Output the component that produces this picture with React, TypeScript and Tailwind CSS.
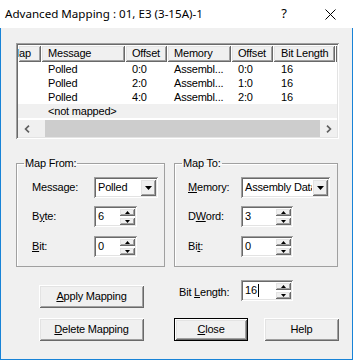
import React from "react";

const raised =
  "bg-[#f0f0f0] shadow-[inset_1px_1px_0_#fff,inset_-1px_-1px_0_#696969,inset_2px_2px_0_#e3e3e3,inset_-2px_-2px_0_#a0a0a0]";
const sunken =
  "bg-white shadow-[inset_1px_1px_0_#a0a0a0,inset_-1px_-1px_0_#fff,inset_2px_2px_0_#696969,inset_-2px_-2px_0_#e3e3e3]";

const colW = ["w-[23px]", "w-[84px]", "w-[42px]", "w-[64px]", "w-[42px]", "w-[62px]"];
const headers = ["Map", "Message", "Offset", "Memory", "Offset", "Bit Length"];
const rows = [
  ["", "Polled", "0:0", "Assembl...", "0:0", "16"],
  ["", "Polled", "2:0", "Assembl...", "1:0", "16"],
  ["", "Polled", "4:0", "Assembl...", "2:0", "16"],
];

function Tri({ up, small }: { up?: boolean; small?: boolean }) {
  if (small) {
    return (
      <svg width="5" height="3" viewBox="0 0 5 3" className="block">
        {up ? <path d="M2.5 0 L5 3 L0 3 Z" fill="#000" /> : <path d="M0 0 L5 0 L2.5 3 Z" fill="#000" />}
      </svg>
    );
  }
  return (
    <svg width="7" height="4" viewBox="0 0 7 4" className="block">
      <path d="M0 0 L7 0 L3.5 4 Z" fill="#000" />
    </svg>
  );
}

function Spin({ value, wide, caret }: { value: string; wide?: boolean; caret?: boolean }) {
  return (
    <div className={`${sunken} ${wide ? "w-[52px]" : "w-[43px]"} h-[21px] p-[2px] flex`}>
      <div className="flex-1 pl-[2px] flex items-center leading-[13px]">
        {value}
        {caret && <span className="inline-block w-px h-[13px] bg-black ml-[1px]" />}
      </div>
      <div className="w-[16px] flex flex-col gap-[1px]">
        <div className={`${raised} flex-1 flex items-center justify-center`}>
          <Tri up small />
        </div>
        <div className={`${raised} flex-1 flex items-center justify-center`}>
          <Tri small />
        </div>
      </div>
    </div>
  );
}

function Combo({ value, w }: { value: string; w: string }) {
  return (
    <div className={`${sunken} ${w} h-[21px] p-[2px] flex`}>
      <div className="flex-1 pl-[2px] flex items-center overflow-hidden whitespace-nowrap">{value}</div>
      <div className={`${raised} w-[16px] flex items-center justify-center`}>
        <Tri />
      </div>
    </div>
  );
}

function Btn({ children, w, isDefault }: { children: React.ReactNode; w: string; isDefault?: boolean }) {
  return (
    <div className={`${w} h-[23px] ${isDefault ? "border border-black" : ""}`}>
      <div className={`${raised} w-full h-full flex items-center justify-center`}>{children}</div>
    </div>
  );
}

function Row({ label, labelW, children, mt }: { label: React.ReactNode; labelW: string; children: React.ReactNode; mt: string }) {
  return (
    <div className={`flex items-center h-[21px] ${mt}`}>
      <div className={labelW}>{label}</div>
      {children}
    </div>
  );
}

export default function App() {
  return (
    <div className="w-[353px] h-[360px] overflow-hidden font-['Liberation_Sans',Arial,sans-serif] text-[11px] tracking-[-0.2px] text-black">
      {/* title bar */}
      <div className="h-[28px] bg-white flex items-center font-['Noto_Sans','Segoe_UI',sans-serif] text-[11.6px] tracking-normal">
        <div className="flex-1 pl-[5px] whitespace-nowrap">Advanced Mapping : 01, E3 (3-15A)-1</div>
        <div className="w-[46px] text-center text-[13px]">?</div>
        <div className="w-[46px] flex justify-center">
          <svg width="11" height="11" viewBox="0 0 11 11">
            <path d="M0.5 0.5 L10.5 10.5 M10.5 0.5 L0.5 10.5" stroke="#000" strokeWidth="1" />
          </svg>
        </div>
      </div>

      <div className="h-[332px] bg-[#f0f0f0] border-l border-r border-b border-[#1883d7] pl-[15px] pt-[15px]">
        {/* list view */}
        <div className={`${sunken} w-[323px] h-[96px] p-[2px] flex flex-col`}>
          <div className="h-[17px] flex">
            {headers.map((h, i) => (
              <div
                key={i}
                className={`${raised} ${colW[i]} h-full flex items-center overflow-hidden whitespace-nowrap ${i === 0 ? "" : i === 5 ? "pl-[8px]" : "pl-[7px]"}`}
              >
                <span className={i === 0 ? "ml-[-8px]" : ""}>{h}</span>
              </div>
            ))}
            <div className={`${raised} flex-1 h-full`} />
          </div>
          {rows.map((r, ri) => (
            <div key={ri} className="h-[14px] flex">
              {r.map((c, ci) => (
                <div key={ci} className={`${colW[ci]} leading-[14px] whitespace-nowrap overflow-hidden ${ci === 5 ? "pl-[8px]" : "pl-[7px]"}`}>
                  {c}
                </div>
              ))}
            </div>
          ))}
          <div className="h-[14px] flex bg-[#f0f0f0]">
            <div className="w-[23px]" />
            <div className="pl-[7px] leading-[14px] whitespace-nowrap">&lt;not mapped&gt;</div>
          </div>
          {/* horizontal scrollbar */}
          <div className="h-[17px] mt-[2px] flex bg-[#f0f0f0]">
            <div className="w-[17px] flex items-center justify-center">
              <svg width="6" height="8" viewBox="0 0 6 8">
                <path d="M5 0.7 L1.6 4 L5 7.3" stroke="#606060" strokeWidth="1.7" fill="none" />
              </svg>
            </div>
            <div className="w-[10px]" />
            <div className="w-[275px] bg-[#cdcdcd]" />
            <div className="w-[17px] flex items-center justify-center">
              <svg width="6" height="8" viewBox="0 0 6 8">
                <path d="M1 0.7 L4.4 4 L1 7.3" stroke="#606060" strokeWidth="1.7" fill="none" />
              </svg>
            </div>
          </div>
        </div>

        {/* group boxes */}
        <div className="flex gap-[9px] mt-[18px]">
          <fieldset className="w-[149px] border border-[#a0a0a0] shadow-[inset_1px_1px_0_#fff]">
            <legend className="ml-[7px] px-[1px] leading-[13px]">Map From:</legend>
            <div className="pl-[15px] mt-[7px] pb-[9px]">
              <Row label="Message:" labelW="w-[62px]" mt="">
                <Combo value="Polled" w="w-[64px]" />
              </Row>
              <Row label={<>B<u>y</u>te:</>} labelW="w-[62px]" mt="mt-[8px]">
                <Spin value="6" />
              </Row>
              <Row label={<><u>B</u>it:</>} labelW="w-[62px]" mt="mt-[9px]">
                <Spin value="0" />
              </Row>
            </div>
          </fieldset>
          <fieldset className="w-[164px] border border-[#a0a0a0] shadow-[inset_1px_1px_0_#fff]">
            <legend className="ml-[7px] px-[1px] leading-[13px]">Map To:</legend>
            <div className="pl-[13px] mt-[7px] pb-[9px]">
              <Row label={<><u>M</u>emory:</>} labelW="w-[53px]" mt="">
                <Combo value="Assembly Data" w="w-[89px]" />
              </Row>
              <Row label={<>D<u>W</u>ord:</>} labelW="w-[53px]" mt="mt-[8px]">
                <Spin value="3" wide />
              </Row>
              <Row label={<>Bi<u>t</u>:</>} labelW="w-[53px]" mt="mt-[9px]">
                <Spin value="0" wide />
              </Row>
            </div>
          </fieldset>
        </div>

        {/* buttons */}
        <div className="flex items-start mt-[13px] pl-[23px]">
          <div className="mt-[5px]">
            <Btn w="w-[105px]">
              <span><u>A</u>pply Mapping</span>
            </Btn>
          </div>
          <div className="ml-[35px] w-[62px] mt-[6px] leading-[13px]">
            Bit <u>L</u>ength:
          </div>
          <Spin value="16" wide caret />
        </div>
        <div className="flex items-start mt-[10px] pl-[23px]">
          <Btn w="w-[105px]">
            <span><u>D</u>elete Mapping</span>
          </Btn>
          <div className="ml-[30px]">
            <Btn w="w-[74px]" isDefault>
              <span><u>C</u>lose</span>
            </Btn>
          </div>
          <div className="ml-[16px]">
            <Btn w="w-[75px]">
              <span>Help</span>
            </Btn>
          </div>
        </div>
      </div>
    </div>
  );
}
